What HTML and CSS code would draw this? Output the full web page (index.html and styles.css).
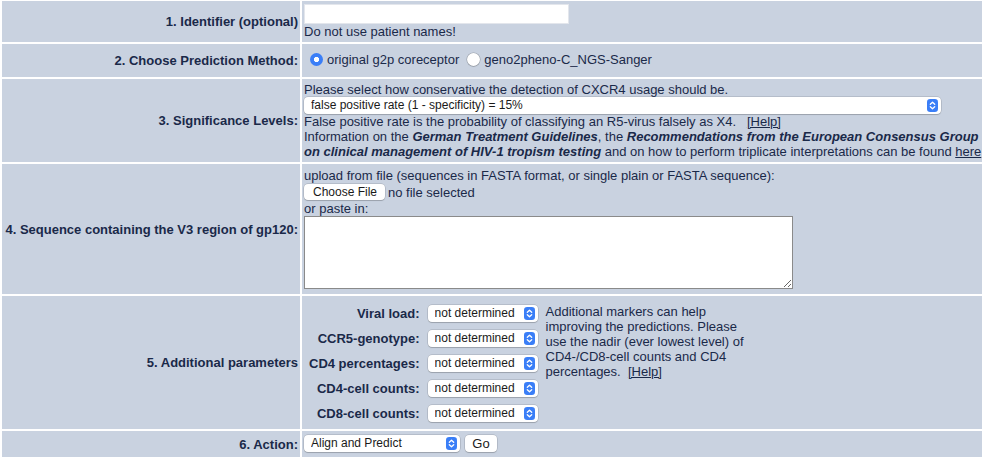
FILE: index.html
```html
<!DOCTYPE html>
<html>
<head>
<meta charset="utf-8">
<title>geno2pheno coreceptor</title>
<link rel="stylesheet" href="styles.css">
</head>
<body>
<form class="form">
  <div class="label">1. Identifier (optional)</div>
  <div class="field f1">
    <input type="text" class="ident">
    <div class="line">Do not use patient names!</div>
  </div>

  <div class="label">2. Choose Prediction Method:</div>
  <div class="field f2">
    <label class="radio"><input type="radio" name="m" checked>original g2p coreceptor</label>
    <label class="radio"><input type="radio" name="m">geno2pheno-C_NGS-Sanger</label>
  </div>

  <div class="label">3. Significance Levels:</div>
  <div class="field f3">
    <div class="line">Please select how conservative the detection of CXCR4 usage should be.</div>
    <span class="sel sel-fpr">
      <select><option>false positive rate (1 - specificity) = 15%</option></select>
      <svg class="arrow" viewBox="0 0 12 14"><rect x="0" y="0" width="12" height="14" rx="3.5" fill="#3a7ef7"/><path d="M3.6 5.6 L6 3.4 L8.4 5.6 M3.6 8.4 L6 10.6 L8.4 8.4" fill="none" stroke="#fff" stroke-width="1.4" stroke-linecap="round" stroke-linejoin="round"/></svg>
    </span>
    <div class="line">False positive rate is the probability of classifying an R5-virus falsely as X4. &nbsp; <a href="#">[Help]</a></div>
    <div class="line">Information on the <b><i>German Treatment Guidelines</i></b>, the <b><i>Recommendations from the European Consensus Group</i></b></div>
    <div class="line"><b><i>on clinical management of HIV-1 tropism testing</i></b> and on how to perform triplicate interpretations can be found <a href="#">here</a></div>
  </div>

  <div class="label">4. Sequence containing the V3 region of gp120:</div>
  <div class="field f4">
    <div class="line">upload from file (sequences in FASTA format, or single plain or FASTA sequence):</div>
    <div class="filerow"><button type="button" class="btn btn-file">Choose File</button><span>no file selected</span></div>
    <div class="line">or paste in:</div>
    <textarea class="seq"></textarea>
  </div>

  <div class="label">5. Additional parameters</div>
  <div class="field f5">
    <div class="params">
      <div class="plabel">Viral load:</div>
      <span class="sel sel-nd"><select><option>not determined</option></select><svg class="arrow" viewBox="0 0 12 14"><rect x="0" y="0" width="12" height="14" rx="3.5" fill="#3a7ef7"/><path d="M3.6 5.6 L6 3.4 L8.4 5.6 M3.6 8.4 L6 10.6 L8.4 8.4" fill="none" stroke="#fff" stroke-width="1.4" stroke-linecap="round" stroke-linejoin="round"/></svg></span>
      <div class="pnote">Additional markers can help<br>improving the predictions. Please<br>use the nadir (ever lowest level) of<br>CD4-/CD8-cell counts and CD4<br>percentages. &nbsp;<a href="#">[Help]</a></div>

      <div class="plabel">CCR5-genotype:</div>
      <span class="sel sel-nd"><select><option>not determined</option></select><svg class="arrow" viewBox="0 0 12 14"><rect x="0" y="0" width="12" height="14" rx="3.5" fill="#3a7ef7"/><path d="M3.6 5.6 L6 3.4 L8.4 5.6 M3.6 8.4 L6 10.6 L8.4 8.4" fill="none" stroke="#fff" stroke-width="1.4" stroke-linecap="round" stroke-linejoin="round"/></svg></span>

      <div class="plabel">CD4 percentages:</div>
      <span class="sel sel-nd"><select><option>not determined</option></select><svg class="arrow" viewBox="0 0 12 14"><rect x="0" y="0" width="12" height="14" rx="3.5" fill="#3a7ef7"/><path d="M3.6 5.6 L6 3.4 L8.4 5.6 M3.6 8.4 L6 10.6 L8.4 8.4" fill="none" stroke="#fff" stroke-width="1.4" stroke-linecap="round" stroke-linejoin="round"/></svg></span>

      <div class="plabel">CD4-cell counts:</div>
      <span class="sel sel-nd"><select><option>not determined</option></select><svg class="arrow" viewBox="0 0 12 14"><rect x="0" y="0" width="12" height="14" rx="3.5" fill="#3a7ef7"/><path d="M3.6 5.6 L6 3.4 L8.4 5.6 M3.6 8.4 L6 10.6 L8.4 8.4" fill="none" stroke="#fff" stroke-width="1.4" stroke-linecap="round" stroke-linejoin="round"/></svg></span>

      <div class="plabel">CD8-cell counts:</div>
      <span class="sel sel-nd"><select><option>not determined</option></select><svg class="arrow" viewBox="0 0 12 14"><rect x="0" y="0" width="12" height="14" rx="3.5" fill="#3a7ef7"/><path d="M3.6 5.6 L6 3.4 L8.4 5.6 M3.6 8.4 L6 10.6 L8.4 8.4" fill="none" stroke="#fff" stroke-width="1.4" stroke-linecap="round" stroke-linejoin="round"/></svg></span>
    </div>
  </div>

  <div class="label">6. Action:</div>
  <div class="field f6">
    <span class="sel sel-action"><select><option>Align and Predict</option></select><svg class="arrow" viewBox="0 0 12 14"><rect x="0" y="0" width="12" height="14" rx="3.5" fill="#3a7ef7"/><path d="M3.6 5.6 L6 3.4 L8.4 5.6 M3.6 8.4 L6 10.6 L8.4 8.4" fill="none" stroke="#fff" stroke-width="1.4" stroke-linecap="round" stroke-linejoin="round"/></svg></span>
    <button type="button" class="btn btn-go">Go</button>
  </div>
</form>
</body>
</html>
```
FILE: styles.css
```css
html, body {
  margin: 0;
  padding: 0;
  background: #ffffff;
}
body {
  font-family: "Liberation Sans", Arial, Helvetica, sans-serif;
  font-size: 13px;
  line-height: 15px;
  color: #1a2949;
}
.form {
  display: grid;
  grid-template-columns: 298px 1fr;
  grid-template-rows: 41px 33px 83px 130px 133px 26px;
  gap: 2px;
  padding: 2px;
  margin-top: -1px;
  background: #ffffff;
}
.label {
  background: #c9d2e0;
  font-weight: bold;
  display: flex;
  align-items: center;
  justify-content: flex-end;
  text-align: right;
  padding-right: 2px;
}
.field {
  background: #c9d2e0;
  padding: 3px 2px;
  min-width: 0;
}
.line {
  white-space: nowrap;
}
a {
  color: #1a2949;
  text-decoration: underline;
}
.ident {
  display: block;
  box-sizing: border-box;
  width: 265px;
  height: 20px;
  margin: 0;
  border: 1px solid #e3e6ec;
  background: #fff;
  padding: 0 3px;
}
.f2 {
  display: flex;
  align-items: center;
  padding-top: 1px;
}
.radio {
  display: inline-flex;
  align-items: center;
  white-space: nowrap;
  margin-right: 0;
}
.radio input {
  appearance: none;
  -webkit-appearance: none;
  width: 13px;
  height: 13px;
  margin: 0 4px 0 6px;
  border-radius: 50%;
  background: #fff;
  box-shadow: 0 0 0 0.5px rgba(0,0,0,0.25), 0 1px 1px rgba(0,0,0,0.12);
}
.radio input:checked {
  background: radial-gradient(circle, #ffffff 0 2.4px, #3a7ef7 2.9px);
  box-shadow: none;
}
.radio + .radio input {
  margin-left: 8px;
}
.sel {
  position: relative;
  display: inline-block;
  vertical-align: top;
  height: 17px;
}
.sel select {
  appearance: none;
  -webkit-appearance: none;
  box-sizing: border-box;
  display: block;
  height: 17px;
  margin: 0;
  border: none;
  border-radius: 4px;
  background: #ffffff;
  box-shadow: 0 0 0 0.5px rgba(0,0,0,0.2), 0 1px 1px rgba(0,0,0,0.15);
  font-family: "Liberation Sans", Arial, Helvetica, sans-serif;
  font-size: 12px;
  line-height: 17px;
  color: #1a1a1a;
  padding: 0 18px 0 7px;
}
.sel .arrow {
  position: absolute;
  right: 3px;
  top: 2px;
  width: 11px;
  height: 13px;
  pointer-events: none;
}
.sel-fpr {
  display: block;
  width: 637px;
}
.sel-fpr select {
  width: 637px;
}
.f4 {
  padding-top: 4px;
}
.filerow {
  display: flex;
  align-items: center;
  height: 18px;
  white-space: nowrap;
}
.btn {
  appearance: none;
  -webkit-appearance: none;
  box-sizing: border-box;
  height: 16px;
  margin: 0;
  border: none;
  border-radius: 4px;
  background: #ffffff;
  box-shadow: 0 0 0 0.5px rgba(0,0,0,0.2), 0 1px 1px rgba(0,0,0,0.15);
  font-family: "Liberation Sans", Arial, Helvetica, sans-serif;
  font-size: 12px;
  line-height: 16px;
  color: #1a1a1a;
  padding: 0 9px;
}
.btn-file {
  width: 81px;
  margin-right: 3px;
}
.seq {
  display: block;
  box-sizing: border-box;
  width: 489px;
  height: 73px;
  margin: 0;
  border: 1px solid #8a8a8a;
  background: #fff;
  resize: both;
}
.f5 {
  padding: 9px 2px 8px 7px;
}
.params {
  display: grid;
  grid-template-columns: auto auto auto;
  grid-auto-rows: 17px;
  column-gap: 8px;
  row-gap: 8px;
  justify-content: start;
}
.plabel {
  font-weight: bold;
  text-align: right;
  white-space: nowrap;
  display: flex;
  align-items: center;
  justify-content: flex-end;
}
.sel-nd select {
  width: 110px;
}
.pnote {
  grid-column: 3;
  grid-row: 1 / span 5;
  align-self: start;
  white-space: nowrap;
  margin-top: -1px;
}
.f6 {
  display: flex;
  align-items: flex-start;
  padding-top: 4px;
  padding-bottom: 0;
}
.sel-action select {
  width: 156px;
}
.btn-go {
  width: 32px;
  height: 17px;
  margin-left: 5px;
  padding: 0;
  font-size: 13px;
}
```
